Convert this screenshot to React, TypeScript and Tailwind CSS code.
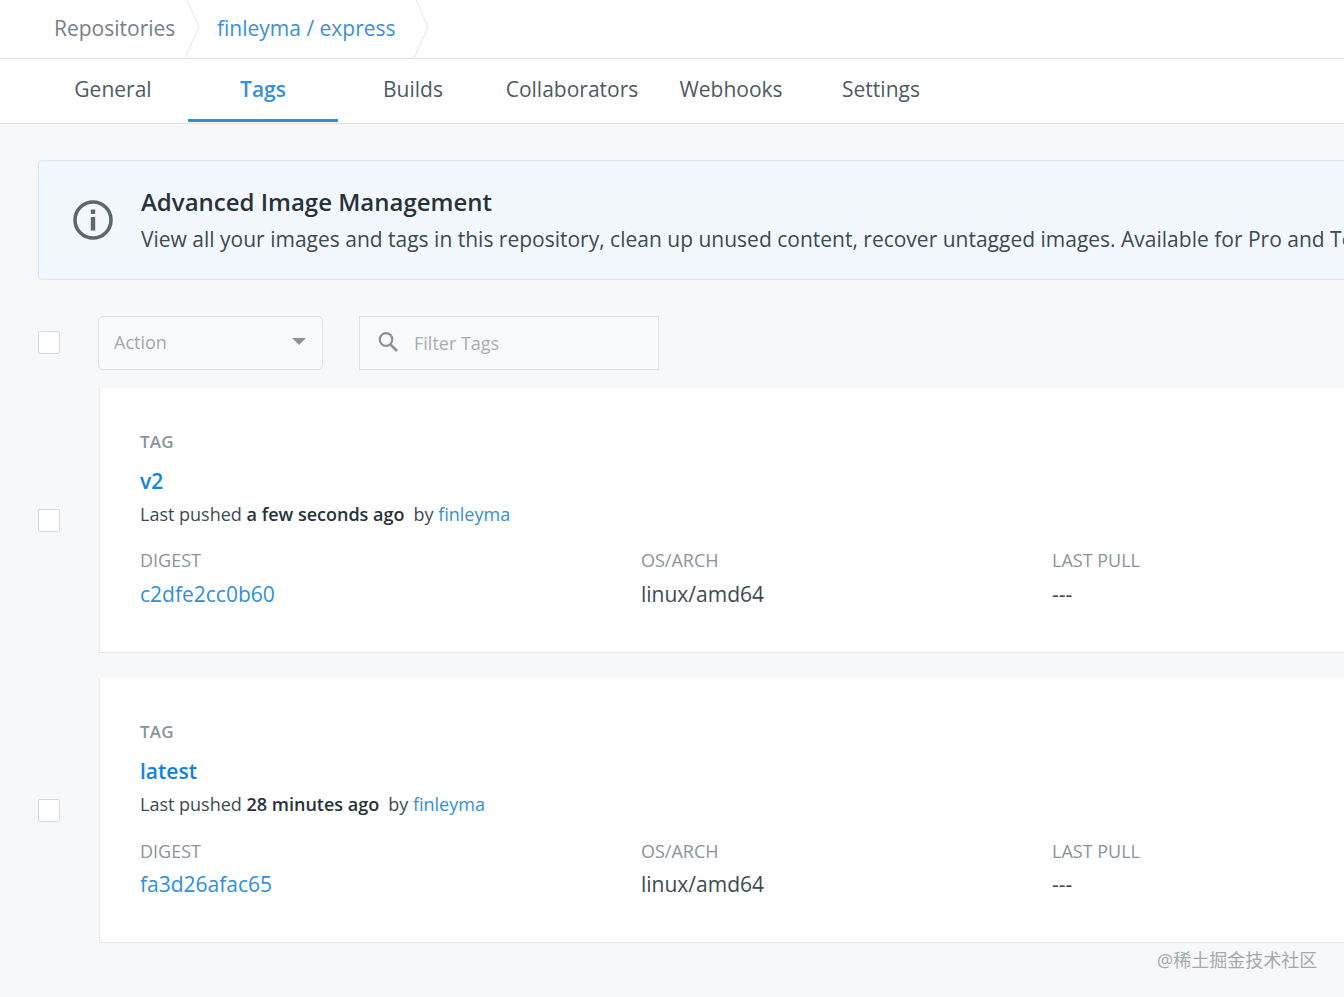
import React from "react";

const Chevron = () => (
  <svg width="18" height="58" viewBox="0 0 18 58" className="block shrink-0" fill="none">
    <path d="M2 0 L14 27 L0 58" stroke="#e9ebed" strokeWidth="1.2" />
  </svg>
);

const Tab = ({ label, active, w }: { label: string; active?: boolean; w: string }) => (
  <div
    className={`${w} h-[63px] flex items-center justify-center text-[21px] pt-[2px] border-b-[3px] ${
      active ? "border-[#2f8fdc] text-[#3d8fd8] font-semibold" : "border-transparent text-[#4e5a62]"
    }`}
  >
    {label}
  </div>
);

const Check = () => (
  <div className="w-[22px] h-[23px] bg-white border border-[#d5d9dc] rounded-[2px] shrink-0" />
);

const Card = ({
  name,
  ago,
  digest,
  labelGap,
  valueGap,
}: {
  name: string;
  ago: string;
  digest: string;
  labelGap: string;
  valueGap: string;
}) => (
  <div className="flex items-center">
    <div className="w-[61px] shrink-0">
      <Check />
    </div>
    <div className="h-[265px] w-[1300px] shrink-0 bg-white border-l border-b border-[#e6e9eb] pl-[40px] pt-[42px]">
      <div className="text-[17px] leading-[24px] font-semibold text-[#8a949b] tracking-[0.2px]">TAG</div>
      <div className="text-[21px] leading-[30px] font-semibold text-[#1283dd] mt-[12px]">{name}</div>
      <div className="text-[18px] leading-[24px] text-[#3e4a52] mt-[6px] flex">
        <span>Last pushed&nbsp;</span>
        <span className="font-semibold text-[#27323a]">{ago}</span>
        <span className="ml-[9px]">by&nbsp;</span>
        <span className="text-[#2f8fdc]">finleyma</span>
      </div>
      <div className={`flex ${labelGap} text-[18px] leading-[24px] text-[#8a949b]`}>
        <div className="w-[501px]">DIGEST</div>
        <div className="w-[411px]">OS/ARCH</div>
        <div>LAST PULL</div>
      </div>
      <div className={`flex ${valueGap} text-[21px] leading-[30px] text-[#3e4a52]`}>
        <div className="w-[501px] text-[#2f8fdc]">{digest}</div>
        <div className="w-[411px]">linux/amd64</div>
        <div>---</div>
      </div>
    </div>
  </div>
);

export default function App() {
  return (
    <div
      className="w-[1344px] h-[997px] overflow-hidden bg-[#f6f8fa] relative"
      style={{ fontFamily: '"Open Sans", sans-serif' }}
    >
      <div className="h-[59px] bg-white border-b border-[#e1e4e6] flex items-start pl-[54px] text-[21px] leading-[56px] whitespace-nowrap">
        <span className="text-[#77808a] w-[131px]">Repositories</span>
        <Chevron />
        <span className="text-[#3d8fd8] ml-[14px] w-[197px]">finleyma / express</span>
        <Chevron />
      </div>
      <div className="h-[65px] bg-white border-b border-[#e1e4e6] flex pl-[38px] whitespace-nowrap">
        <Tab label="General" w="w-[150px]" />
        <Tab label="Tags" active w="w-[150px]" />
        <Tab label="Builds" w="w-[150px]" />
        <Tab label="Collaborators" w="w-[168px]" />
        <Tab label="Webhooks" w="w-[150px]" />
        <Tab label="Settings" w="w-[150px]" />
      </div>

      <div className="pl-[38px] pt-[36px]">
        <div className="w-[1400px] h-[120px] bg-[#f3f8fe] border border-[#dce6f0] rounded-[4px] flex items-center whitespace-nowrap">
          <svg width="40" height="40" viewBox="0 0 40 40" className="ml-[34px] shrink-0" fill="none">
            <circle cx="20" cy="20" r="18" stroke="#5f676e" strokeWidth="3.6" />
            <rect x="17.8" y="9.5" width="4.4" height="4.4" fill="#5f676e" />
            <rect x="17.8" y="17" width="4.4" height="13.5" fill="#5f676e" />
          </svg>
          <div className="ml-[28px]">
            <div className="text-[24px] leading-[34px] font-semibold text-[#27323a]">
              Advanced Image Management
            </div>
            <div className="text-[21px] leading-[34px] text-[#3e4a52] mt-[3px]">
              View all your images and tags in this repository, clean up unused content, recover untagged images. Available for Pro and Team accounts.
            </div>
          </div>
        </div>

        <div className="flex items-center mt-[36px] h-[54px]">
          <div className="w-[60px] shrink-0 -mt-[2px]">
            <Check />
          </div>
          <div className="w-[225px] h-[54px] border border-[#dfe3e6] rounded-[5px] bg-[#f9fafb] flex items-center justify-between pl-[15px] pr-[15px]">
            <span className="text-[18px] text-[#a3a8ac] -mt-[2px]">Action</span>
            <span className="w-0 h-0 border-l-[7px] border-r-[7px] border-t-[7px] border-l-transparent border-r-transparent border-t-[#8f9499] mb-[4px] mr-[1px]" />
          </div>
          <div className="w-[300px] h-[54px] ml-[36px] border border-[#dfe3e6] bg-[#f9fafb] flex items-center pl-[16px]">
            <svg width="24" height="24" viewBox="0 0 24 24" fill="none" className="shrink-0 -mt-[2px]">
              <circle cx="10" cy="9.5" r="6.3" stroke="#8b9094" strokeWidth="2.2" />
              <path d="M14.5 14.5 L21 21" stroke="#8b9094" strokeWidth="2.6" />
            </svg>
            <span className="text-[18px] text-[#a8adb1] ml-[14px]">Filter Tags</span>
          </div>
        </div>

        <div className="mt-[18px]">
          <Card name="v2" ago="a few seconds ago" digest="c2dfe2cc0b60" labelGap="mt-[22px]" valueGap="mt-[7px]" />
          <div className="h-[25px]" />
          <Card name="latest" ago="28 minutes ago" digest="fa3d26afac65" labelGap="mt-[23px]" valueGap="mt-[6px]" />
        </div>
      </div>

      <div
        className="absolute left-[1157px] top-[948px] text-[18px] leading-[24px] text-[#a6a9ac] whitespace-nowrap"
        style={{ fontFamily: '"Open Sans", "Noto Sans CJK SC", sans-serif' }}
      >
        @稀土掘金技术社区
      </div>
    </div>
  );
}
